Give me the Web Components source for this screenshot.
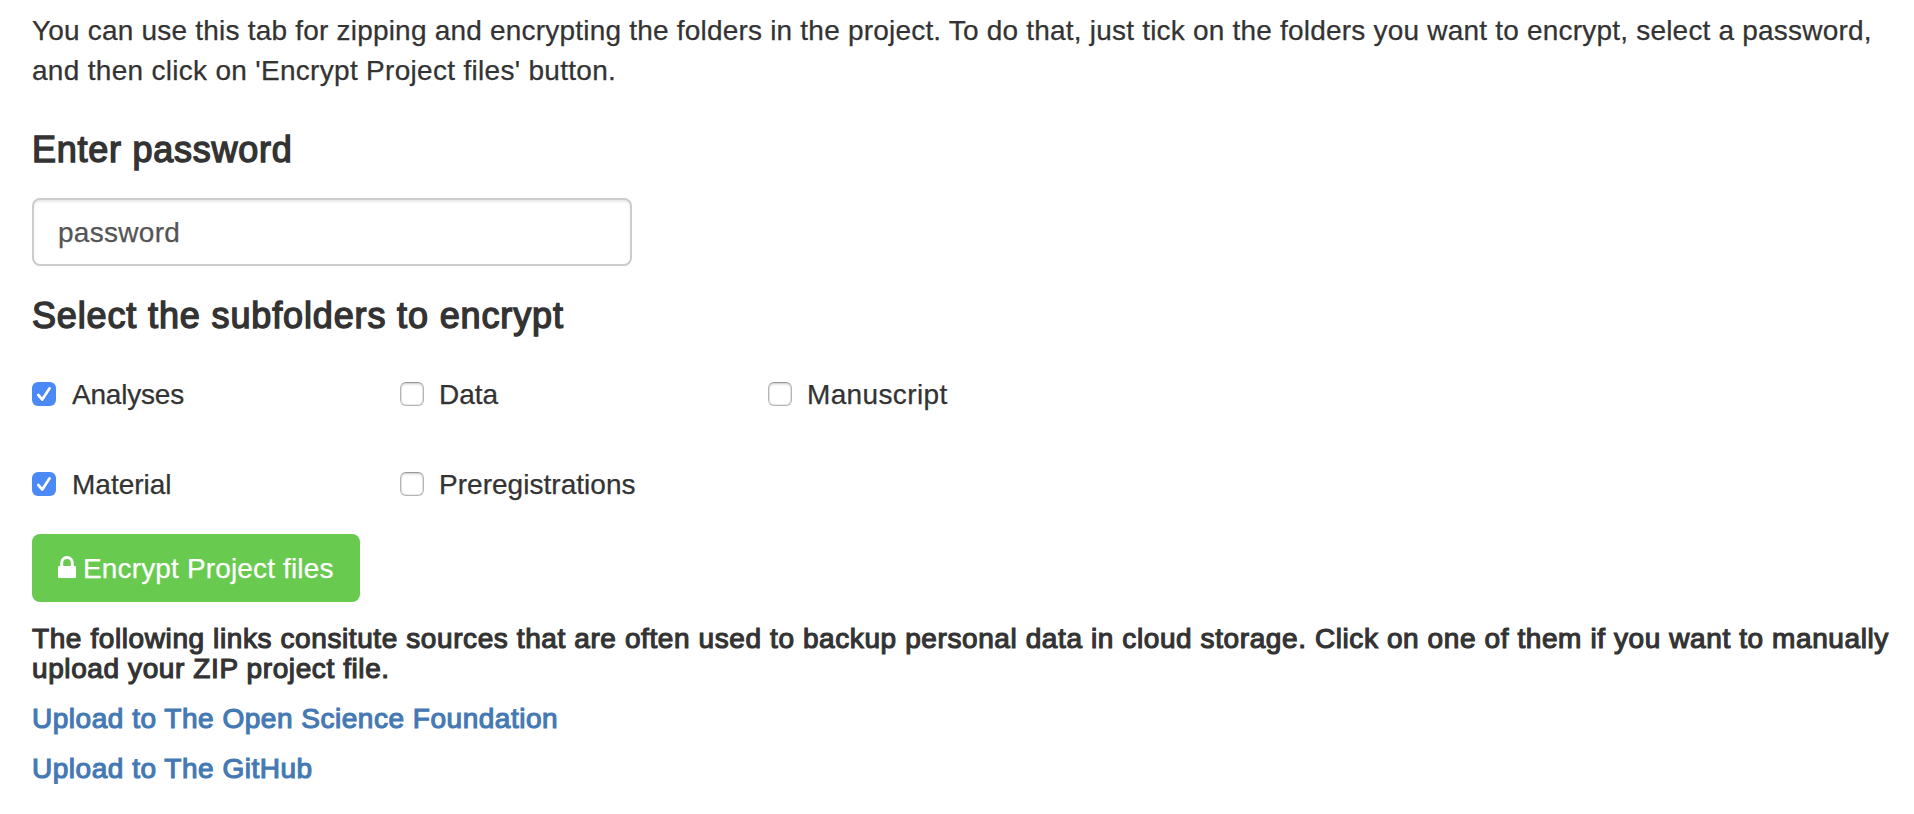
<!DOCTYPE html>
<html lang="en">
<head>
<meta charset="utf-8">
<title>Encrypt project</title>
<style>
body{margin:0;background:#fff;color:#333;font-family:"Liberation Sans",Arial,sans-serif;font-size:28px;line-height:40px;-webkit-text-stroke:.25px currentColor}
</style>
</head>
<body>
<encrypt-tab></encrypt-tab>
<script>
const define=(name,html,setup)=>customElements.define(name,class extends HTMLElement{
  connectedCallback(){
    if(this.shadowRoot)return;
    this.attachShadow({mode:"open"}).innerHTML=html;
    if(setup)setup(this,this.shadowRoot);
  }
});

define("text-line",`<style>
:host{display:block;white-space:nowrap}
</style><span><slot></slot></span>`);

define("section-title",`<style>
:host{display:block}
h3{margin:0;font-size:36px;line-height:40px;font-weight:400;-webkit-text-stroke:1.4px #333;white-space:nowrap}
</style><h3><slot></slot></h3>`);

define("text-field",`<style>
:host{display:block;width:600px;height:68px}
input{box-sizing:border-box;display:block;width:100%;height:100%;margin:0;padding:2px 24px 0;border:2px solid #ccc;border-radius:8px;background:#fff;box-shadow:inset 0 2px 2px rgba(0,0,0,.075);font:inherit;letter-spacing:inherit;color:#555;outline:0}
</style><input type="text" aria-label="Enter password">`,(el,root)=>{root.querySelector("input").value=el.getAttribute("value")||""});

define("check-option",`<style>
:host{display:flex;align-items:center;height:40px}
i{box-sizing:border-box;flex:none;width:24px;height:24px;margin-right:var(--gap,15px);border:1px solid #b4b4b4;border-top-color:#999;border-radius:6px;background:#fff;box-shadow:inset 0 0 1px 1px rgba(0,0,0,.1),inset 0 2px 2px rgba(0,0,0,.08)}
svg{display:none}
:host([checked]) i{border:0;background:#4a89f6;box-shadow:none}
:host([checked]) svg{display:block}
span{padding-top:2px;white-space:nowrap}
</style><i><svg width="24" height="24" viewBox="0 0 24 24" fill="none" stroke-linecap="round" stroke-linejoin="round"><path d="M6.500 14 10.500 18.700 17.800 7.700" stroke="#2f66c4" stroke-opacity=".35" stroke-width="2.800"/><path d="M6.300 13 10.300 17.600 17.500 6.500" stroke="#fff" stroke-width="2.800"/></svg></i><span><slot></slot></span>`);

define("action-button",`<style>
:host{display:block;width:328px;height:68px}
button{box-sizing:border-box;width:100%;height:100%;display:flex;align-items:center;margin:0;padding:0 0 0 26px;border:0;border-radius:8px;background:#68ca4f;color:#fff;font:inherit;letter-spacing:inherit;white-space:nowrap}
svg{flex:none;margin:0 7px 2px 0}
span{padding-top:2px}
</style><button><svg width="18" height="22" viewBox="0 0 18 22"><path d="M3.700 11V6.800a5.300 5.300 0 0 1 10.600 0V11" fill="none" stroke="#fff" stroke-width="3"/><rect y="10" width="18" height="12" rx="1.200" fill="#fff"/></svg><span><slot></slot></span></button>`);

define("strong-line",`<style>
:host{display:block;line-height:30px;-webkit-text-stroke:1.15px currentColor;white-space:nowrap}
</style><span><slot></slot></span>`);

define("encrypt-tab",`<style>
:host{display:block;padding:11px 0 0 32px}
section-title{margin-top:39px;letter-spacing:.74px}
text-field{margin:28px 0 30px;letter-spacing:.3px}
.sub{margin-top:0;letter-spacing:.86px}
.grid{display:grid;grid-template-columns:repeat(3,368px);row-gap:50px;margin:38px 0 30px}
.first{--gap:16px}
.notes{margin-top:22px}
.link{margin-top:20px;color:#4479b4;letter-spacing:.52px}
</style>
<text-line style="letter-spacing:.205px">You can use this tab for zipping and encrypting the folders in the project. To do that, just tick on the folders you want to encrypt, select a password,</text-line>
<text-line style="letter-spacing:.3px">and then click on 'Encrypt Project files' button.</text-line>
<section-title>Enter password</section-title>
<text-field value="password"></text-field>
<section-title class="sub">Select the subfolders to encrypt</section-title>
<div class="grid">
<check-option class="first" checked style="letter-spacing:-.2px">Analyses</check-option><check-option>Data</check-option><check-option style="letter-spacing:.36px">Manuscript</check-option>
<check-option class="first" checked>Material</check-option><check-option style="letter-spacing:.03px">Preregistrations</check-option>
</div>
<action-button style="letter-spacing:.15px">Encrypt Project files</action-button>
<div class="notes">
<strong-line style="letter-spacing:.595px">The following links consitute sources that are often used to backup personal data in cloud storage. Click on one of them if you want to manually</strong-line>
<strong-line style="letter-spacing:.6px">upload your ZIP project file.</strong-line>
</div>
<strong-line class="link">Upload to The Open Science Foundation</strong-line>
<strong-line class="link">Upload to The GitHub</strong-line>`);
</script>
</body>
</html>
